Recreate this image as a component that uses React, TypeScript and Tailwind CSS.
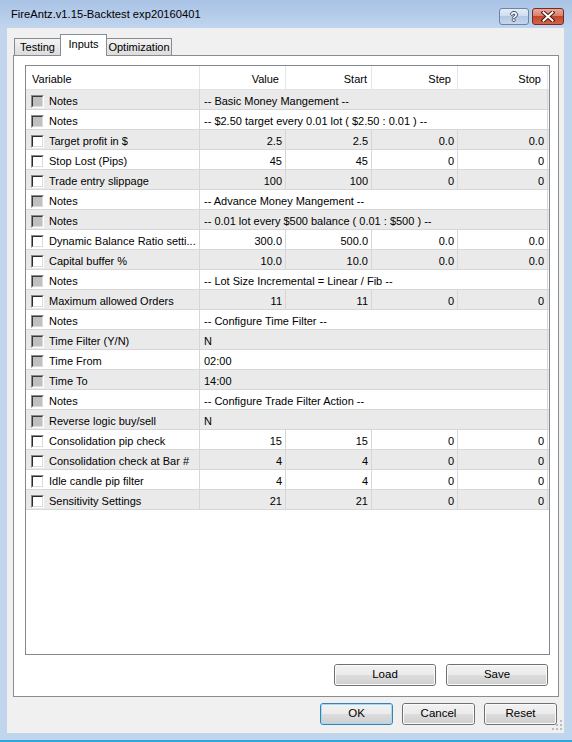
import React from "react";

type Row = {
  name: string;
  enabled: boolean;
  text?: string;
  vals?: [string, string, string, string];
};

const rows: Row[] = [
  { name: "Notes", enabled: false, text: "-- Basic Money Mangement --" },
  { name: "Notes", enabled: false, text: "-- $2.50 target every 0.01 lot ( $2.50 : 0.01 ) --" },
  { name: "Target profit in $", enabled: true, vals: ["2.5", "2.5", "0.0", "0.0"] },
  { name: "Stop Lost (Pips)", enabled: true, vals: ["45", "45", "0", "0"] },
  { name: "Trade entry slippage", enabled: true, vals: ["100", "100", "0", "0"] },
  { name: "Notes", enabled: false, text: "-- Advance Money Mangement --" },
  { name: "Notes", enabled: false, text: "-- 0.01 lot every $500 balance ( 0.01 : $500 ) --" },
  { name: "Dynamic Balance Ratio setti...", enabled: true, vals: ["300.0", "500.0", "0.0", "0.0"] },
  { name: "Capital buffer %", enabled: true, vals: ["10.0", "10.0", "0.0", "0.0"] },
  { name: "Notes", enabled: false, text: "-- Lot Size Incremental = Linear / Fib --" },
  { name: "Maximum allowed Orders", enabled: true, vals: ["11", "11", "0", "0"] },
  { name: "Notes", enabled: false, text: "-- Configure Time Filter --" },
  { name: "Time Filter (Y/N)", enabled: false, text: "N" },
  { name: "Time From", enabled: false, text: "02:00" },
  { name: "Time To", enabled: false, text: "14:00" },
  { name: "Notes", enabled: false, text: "-- Configure Trade Filter Action --" },
  { name: "Reverse logic buy/sell", enabled: false, text: "N" },
  { name: "Consolidation pip check", enabled: true, vals: ["15", "15", "0", "0"] },
  { name: "Consolidation check at Bar #", enabled: true, vals: ["4", "4", "0", "0"] },
  { name: "Idle candle pip filter", enabled: true, vals: ["4", "4", "0", "0"] },
  { name: "Sensitivity Settings", enabled: true, vals: ["21", "21", "0", "0"] },
];

function Checkbox({ enabled }: { enabled: boolean }) {
  return (
    <div className="w-[13px] h-[13px] shrink-0 border border-t-[#8a8a8a] border-l-[#8a8a8a] border-r-white border-b-white">
      <div
        className={
          enabled
            ? "w-full h-full border border-t-[#2a2a2a] border-l-[#2a2a2a] border-r-[#dcdcdc] border-b-[#dcdcdc] bg-white"
            : "w-full h-full border border-t-[#3a3a3a] border-l-[#3a3a3a] border-r-[#dcdcdc] border-b-[#dcdcdc] bg-[#c0c0c0]"
        }
      />
    </div>
  );
}

function Btn({ label, w, def }: { label: string; w: string; def?: boolean }) {
  return (
    <div
      className={
        (def
          ? "border-[#3c7fb1] "
          : "border-[#707070] ") +
        w +
        " h-full border rounded-[3px] bg-[linear-gradient(to_bottom,#f2f2f2_0%,#ebebeb_50%,#dddddd_50%,#cfcfcf_100%)]"
      }
    >
      <div
        className={
          (def ? "border-[#9fdcf9] " : "border-[#fbfbfb] ") +
          "w-full h-full border rounded-[2px] flex items-center justify-center text-[11.5px] text-black"
        }
      >
        {label}
      </div>
    </div>
  );
}

function TitleBar() {
  return (
    <div className="h-[28px] shrink-0 flex items-start pl-[11px] pr-[8px] bg-[linear-gradient(to_bottom,#a9c3e5_0%,#b6cdea_60%,#c1d5ed_100%)]">
      <div className="h-[28px] flex items-center pt-[1px] text-[11.2px] text-black flex-1">
        FireAntz.v1.15-Backtest exp20160401
      </div>
      <div className="flex gap-[3px] pt-[8px]">
        <div className="w-[30px] h-[17px] rounded-[3px] border border-[#6a84a6] bg-[linear-gradient(to_bottom,#e4edf8_0%,#cddcef_50%,#b3c9e4_50%,#c4d6ec_100%)] flex items-center justify-center">
          <span className="text-white font-bold text-[12px] leading-none [text-shadow:1px_0_#3b4a60,-1px_0_#3b4a60,0_1px_#3b4a60,0_-1px_#3b4a60]">
            ?
          </span>
        </div>
        <div className="w-[32px] h-[17px] rounded-[3px] border border-[#7a2a1f] bg-[linear-gradient(to_bottom,#e9a899_0%,#d9826c_45%,#c4452d_50%,#d2654b_100%)] flex items-center justify-center">
          <svg width="14" height="11" viewBox="0 0 14 11">
            <path d="M2.5 1.5 L11.5 9.5 M11.5 1.5 L2.5 9.5" stroke="#4a1a12" strokeWidth="4" strokeLinecap="square" />
            <path d="M2.5 1.5 L11.5 9.5 M11.5 1.5 L2.5 9.5" stroke="#ffffff" strokeWidth="2" strokeLinecap="square" />
          </svg>
        </div>
      </div>
    </div>
  );
}

function Tabs() {
  const base =
    "h-[17px] border border-b-0 border-[#898c95] bg-[linear-gradient(to_bottom,#f3f3f3_0%,#e8e8e8_50%,#dcdcdc_100%)] flex items-center justify-center text-[11px] text-black";
  return (
    <div className="h-[21px] mt-[6px] ml-[7px] flex items-end shrink-0">
      <div className={base + " w-[47px]"}>Testing</div>
      <div className="relative z-10 -ml-[1px] -mb-[1px] w-[47px] h-[22px] border border-b-0 border-[#898c95] bg-white flex items-center justify-center pb-[2px] text-[11px] text-black">
        Inputs
      </div>
      <div className={base + " w-[66px] -ml-[1px]"}>Optimization</div>
    </div>
  );
}

function Header() {
  const cell = "h-full flex items-center pt-[4px] border-r border-[#e5e5e5]";
  return (
    <div className="h-[24px] shrink-0 flex border-b border-[#e2e2e2] bg-white text-[11px]">
      <div className={cell + " w-[174px] pl-[6px]"}>Variable</div>
      <div className={cell + " w-[86px] justify-end pr-[6px]"}>Value</div>
      <div className={cell + " w-[86px] justify-end pr-[4px]"}>Start</div>
      <div className={cell + " w-[86px] justify-end pr-[6px]"}>Step</div>
      <div className={cell + " w-[90px] justify-end pr-[6px]"}>Stop</div>
    </div>
  );
}

function DataRow({ r, i }: { r: Row; i: number }) {
  const bg = i % 2 === 0 ? "bg-[#eaeaea]" : "bg-white";
  const num = "h-full flex items-center justify-end pt-[3px] pr-[3px] border-r border-[#d7d7d7]";
  return (
    <div className={"h-[20px] shrink-0 flex border-b border-[#d7d7d7] text-[11px] " + bg}>
      <div className="w-[174px] h-full flex items-center pt-[3px] pl-[5px] gap-[5px] border-r border-[#d7d7d7] whitespace-nowrap overflow-hidden">
        <Checkbox enabled={r.enabled} />
        <span>{r.name}</span>
      </div>
      {r.vals ? (
        <>
          <div className={num + " w-[86px]"}>{r.vals[0]}</div>
          <div className={num + " w-[86px]"}>{r.vals[1]}</div>
          <div className={num + " w-[86px]"}>{r.vals[2]}</div>
          <div className={num + " w-[90px]"}>{r.vals[3]}</div>
        </>
      ) : (
        <div className="w-[348px] h-full flex items-center pt-[3px] pl-[4px] border-r border-[#d7d7d7] whitespace-nowrap">
          {r.text}
        </div>
      )}
    </div>
  );
}

export default function App() {
  return (
    <div className="w-[572px] h-[742px] bg-[#c1d5ed] flex flex-col font-['Liberation_Sans',Arial,sans-serif] text-black overflow-hidden relative border-b-[2px] border-[#2ea8dc]">
      <TitleBar />
      <div className="flex-1 ml-[7px] mr-[8px] mb-[7px] bg-[#f0f0f0] flex flex-col relative">
        <Tabs />
        <div className="flex-1 ml-[6px] mr-[5px] border border-[#898c95] bg-white flex flex-col pt-[9px] pl-[11px] pr-[8px] pb-[10px]">
          <div className="flex-1 border border-[#828790] bg-white flex flex-col overflow-hidden">
            <Header />
            {rows.map((r, i) => (
              <DataRow key={i} r={r} i={i} />
            ))}
          </div>
          <div className="h-[22px] mt-[9px] flex justify-end gap-[10px] pr-[2px] shrink-0">
            <Btn label="Load" w="w-[102px]" />
            <Btn label="Save" w="w-[102px]" />
          </div>
        </div>
        <div className="h-[22px] mt-[6px] mb-[8px] flex justify-end gap-[9px] pr-[7px] shrink-0">
          <Btn label="OK" w="w-[73px]" def />
          <Btn label="Cancel" w="w-[73px]" />
          <Btn label="Reset" w="w-[73px]" />
        </div>
        <svg className="absolute right-[1px] bottom-[2px]" width="11" height="11" viewBox="0 0 11 11">
          <rect x="8" y="0" width="2" height="2" fill="#b9bcc2" />
          <rect x="4" y="4" width="2" height="2" fill="#b9bcc2" />
          <rect x="8" y="4" width="2" height="2" fill="#b9bcc2" />
          <rect x="0" y="8" width="2" height="2" fill="#b9bcc2" />
          <rect x="4" y="8" width="2" height="2" fill="#b9bcc2" />
          <rect x="8" y="8" width="2" height="2" fill="#b9bcc2" />
        </svg>
      </div>
    </div>
  );
}
